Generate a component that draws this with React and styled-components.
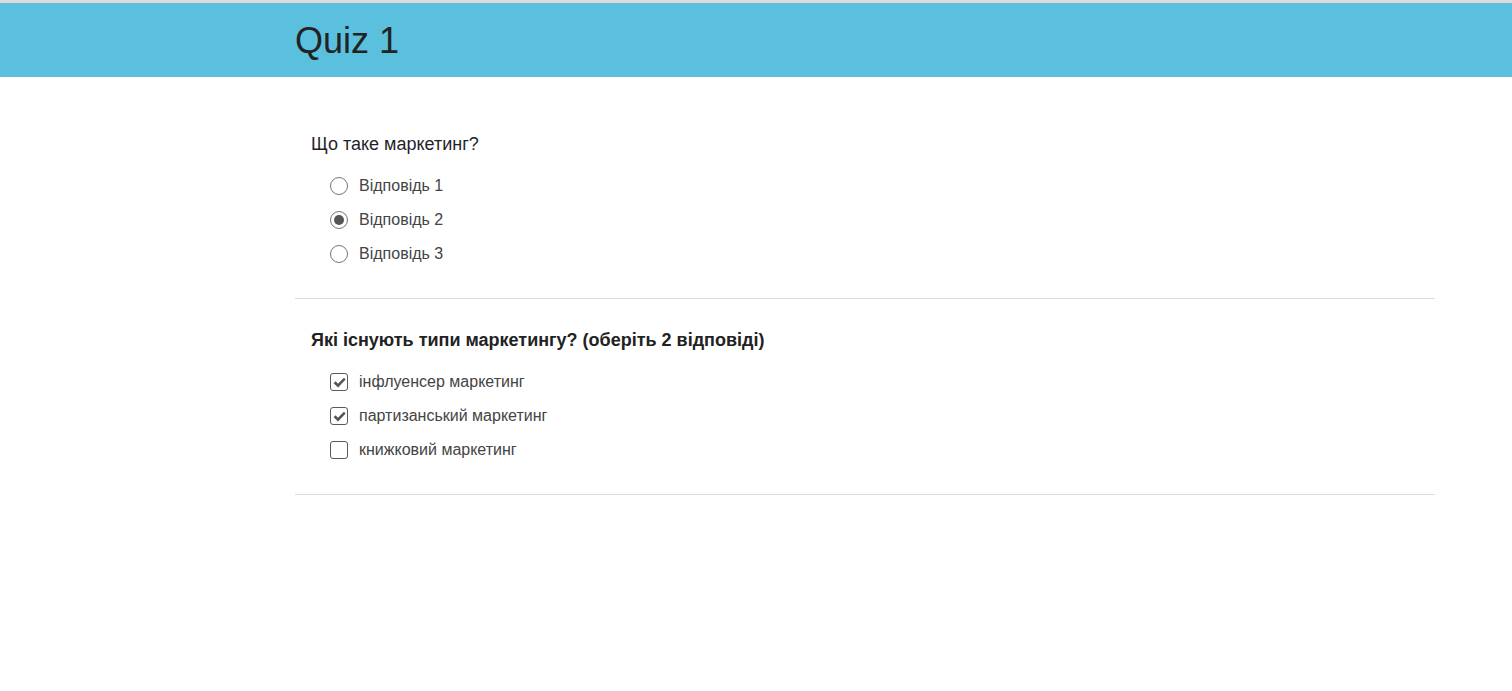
import React, { useState } from "react";
import styled, { createGlobalStyle } from "styled-components";

const GlobalStyle = createGlobalStyle`
  * { box-sizing: border-box; }
  body {
    margin: 0;
    background: #fff;
    font-family: "Liberation Sans", Arial, sans-serif;
    color: #333;
  }
`;

const questions = [
  {
    id: 1,
    text: "Що таке маркетинг?",
    type: "radio",
    bold: false,
    options: ["Відповідь 1", "Відповідь 2", "Відповідь 3"],
    selected: [1],
  },
  {
    id: 2,
    text: "Які існують типи маркетингу? (оберіть 2 відповіді)",
    type: "checkbox",
    bold: true,
    options: ["інфлуенсер маркетинг", "партизанський маркетинг", "книжковий маркетинг"],
    selected: [0, 1],
  },
];

function App() {
  return (
    <>
      <GlobalStyle />
      <Header>
        <Container>
          <Title>Quiz 1</Title>
        </Container>
      </Header>
      <Container>
        <Main>
          {questions.map((q) => (
            <Question key={q.id} q={q} />
          ))}
        </Main>
      </Container>
    </>
  );
}

function Question({ q }) {
  const [selected, setSelected] = useState(q.selected);

  const toggle = (i) => {
    if (q.type === "radio") {
      setSelected([i]);
    } else {
      setSelected(selected.includes(i) ? selected.filter((s) => s !== i) : [...selected, i]);
    }
  };

  return (
    <Section>
      <QuestionText $bold={q.bold}>{q.text}</QuestionText>
      <Options>
        {q.options.map((opt, i) => {
          const on = selected.includes(i);
          return (
            <Option key={opt} onClick={() => toggle(i)}>
              {q.type === "radio" ? (
                <Radio $on={on} />
              ) : (
                <Checkbox>
                  {on && (
                    <svg width="13" height="11" viewBox="0 0 13 11">
                      {/* heavy check mark */}
                      <path d="M0.6 6.2 L2.6 4.3 L5 6.8 L10.9 0.7 L12.6 2.4 L5.1 10.6 Z" fill="#555" />
                    </svg>
                  )}
                </Checkbox>
              )}
              <OptionLabel>{opt}</OptionLabel>
            </Option>
          );
        })}
      </Options>
    </Section>
  );
}

const Header = styled.header`
  border-top: 3px solid #dcdcdc;
  background: #5bc0de;
  padding: 18px 0 16px;
`;

const Container = styled.div`
  width: 1140px;
  margin-left: 295px;
`;

const Title = styled.h1`
  margin: 0;
  font-size: 36px;
  line-height: 40px;
  font-weight: 400;
  color: #222;
`;

const Main = styled.main`
  padding-top: 26px;
`;

const Section = styled.section`
  padding: 29px 0 27px 16px;
  border-bottom: 1px solid #ddd;
`;

const QuestionText = styled.div`
  font-size: 18px;
  line-height: 24px;
  font-weight: ${(p) => (p.$bold ? 700 : 400)};
  color: ${(p) => (p.$bold ? "#222" : "#1f1f2a")};
`;

const Options = styled.div`
  margin-top: 13px;
  padding-left: 19px;
  display: flex;
  flex-direction: column;
`;

const Option = styled.label`
  height: 34px;
  display: flex;
  align-items: center;
  gap: 11px;
  cursor: pointer;
`;

const Radio = styled.span`
  width: 18px;
  height: 18px;
  border-radius: 50%;
  border: 1px solid #767676;
  display: flex;
  align-items: center;
  justify-content: center;
  &::after {
    content: "";
    width: 10px;
    height: 10px;
    border-radius: 50%;
    background: ${(p) => (p.$on ? "#555" : "transparent")};
  }
`;

const Checkbox = styled.span`
  width: 18px;
  height: 18px;
  border-radius: 3px;
  border: 1.5px solid #5a5a5a;
  display: flex;
  align-items: center;
  justify-content: center;
`;

const OptionLabel = styled.span`
  font-size: 16px;
  color: #444;
`;

export default App;
